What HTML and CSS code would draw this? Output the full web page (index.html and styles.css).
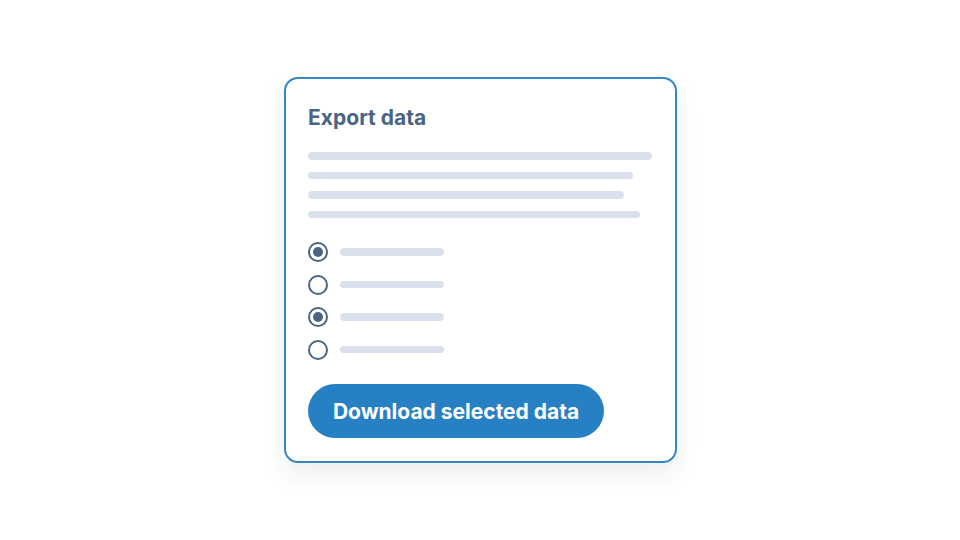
FILE: index.html
```html
<!DOCTYPE html>
<html>
<head>
<meta charset="utf-8">
<link rel="stylesheet" href="styles.css">
</head>
<body>
<div class="stage">
  <div class="card">
    <h2 class="title">Export data</h2>
    <div class="text-lines">
      <div class="line" style="width:344px"></div>
      <div class="line" style="width:325px"></div>
      <div class="line" style="width:316px"></div>
      <div class="line" style="width:332px"></div>
    </div>
    <div class="options">
      <div class="option"><span class="radio checked"></span><span class="opt-line"></span></div>
      <div class="option"><span class="radio"></span><span class="opt-line"></span></div>
      <div class="option"><span class="radio checked"></span><span class="opt-line"></span></div>
      <div class="option"><span class="radio"></span><span class="opt-line"></span></div>
    </div>
    <button class="btn">Download selected data</button>
  </div>
</div>
</body>
</html>
```

FILE: styles.css
```css
html, body {
  margin: 0;
  padding: 0;
  background: #ffffff;
}
.stage {
  width: 960px;
  height: 540px;
  box-sizing: border-box;
  padding-top: 77px;
  display: flex;
  align-items: flex-start;
  justify-content: center;
}
.card {
  box-sizing: border-box;
  width: 393px;
  height: 386px;
  border: 2px solid #3586c5;
  border-radius: 14px;
  background: #fff;
  box-shadow: 0 12px 24px rgba(30, 40, 60, 0.08);
  padding: 26px 22.6px 22.6px 22.6px;
  display: flex;
  flex-direction: column;
  font-family: Inter, "Liberation Sans", sans-serif;
}
.title {
  margin: 0;
  font-size: 21px;
  line-height: 26px;
  font-weight: 700;
  color: #4a6583;
}
.text-lines {
  margin-top: 21px;
  display: flex;
  flex-direction: column;
  gap: 12px;
}
.line {
  height: 7.5px;
  border-radius: 4px;
  background: #dae1ec;
}
.options {
  margin-top: 24px;
  display: flex;
  flex-direction: column;
  gap: 12.5px;
}
.option {
  display: flex;
  align-items: center;
  gap: 12px;
}
.radio {
  box-sizing: border-box;
  width: 20px;
  height: 20px;
  border: 2px solid #4a6583;
  border-radius: 50%;
  display: flex;
  align-items: center;
  justify-content: center;
}
.radio.checked::after {
  content: "";
  width: 10px;
  height: 10px;
  border-radius: 50%;
  background: #4a6583;
}
.opt-line {
  width: 104px;
  height: 7.5px;
  border-radius: 4px;
  background: #dae1ec;
}
.btn {
  margin-top: auto;
  align-self: flex-start;
  width: 296px;
  height: 54px;
  border: none;
  border-radius: 27px;
  background: #2780c4;
  color: #fff;
  font-family: Inter, "Liberation Sans", sans-serif;
  font-size: 21px;
  font-weight: 700;
  padding: 0;
}
```
